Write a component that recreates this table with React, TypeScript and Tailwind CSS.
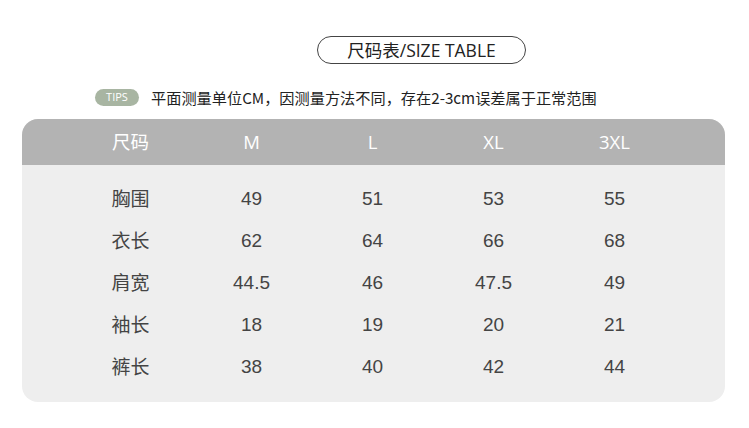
const heads = ["尺码", "M", "L", "XL", "3XL"];

const rows: [string, string, string, string, string][] = [
  ["胸围", "49", "51", "53", "55"],
  ["衣长", "62", "64", "66", "68"],
  ["肩宽", "44.5", "46", "47.5", "49"],
  ["袖长", "18", "19", "20", "21"],
  ["裤长", "38", "40", "42", "44"],
];

const font = "font-['Open_Sans','Noto_Sans_CJK_SC',sans-serif]";
const numFont = "font-['Liberation_Sans','Noto_Sans_CJK_SC',sans-serif]";

export default function App() {
  return (
    <div className={`w-[749px] h-[428px] bg-white ${font} overflow-hidden`}>
      <div className="flex justify-center pt-[36px] pl-[94px]">
        <div className="w-[209px] h-[28px] rounded-full border border-[#444] flex items-center justify-center text-[17.5px] text-[#222]">
          尺码表/SIZE TABLE
        </div>
      </div>

      <div className="flex items-center mt-[24px] ml-[95px] h-[18px]">
        <span className="w-[44px] h-[17px] rounded-full bg-[#a8b5a2] text-white text-[11px] flex items-center justify-center">
          TIPS
        </span>
        <span className="ml-[12px] text-[15.2px] text-[#222] font-['Noto_Sans_CJK_SC',sans-serif]">
          平面测量单位CM，因测量方法不同，存在2-3cm误差属于正常范围
        </span>
      </div>

      <div className="mt-[13px] mx-[22px] w-[703px] rounded-[16px] overflow-hidden bg-[#eeeeee]">
        <div className="h-[46px] bg-[#b3b3b3] flex items-center pl-[48px]">
          {heads.map((h) => (
            <div key={h} className="w-[121px] text-center text-white text-[18.5px]">
              {h}
            </div>
          ))}
        </div>
        <div className="pt-[13px] pb-[14px] pl-[48px]">
          {rows.map((r) => (
            <div key={r[0]} className="h-[42px] flex items-center">
              {r.map((c, i) => (
                <div
                  key={i}
                  className={`w-[121px] text-center text-[19px] text-[#444] ${i === 0 ? "" : numFont}`}
                >
                  {c}
                </div>
              ))}
            </div>
          ))}
        </div>
      </div>
    </div>
  );
}
